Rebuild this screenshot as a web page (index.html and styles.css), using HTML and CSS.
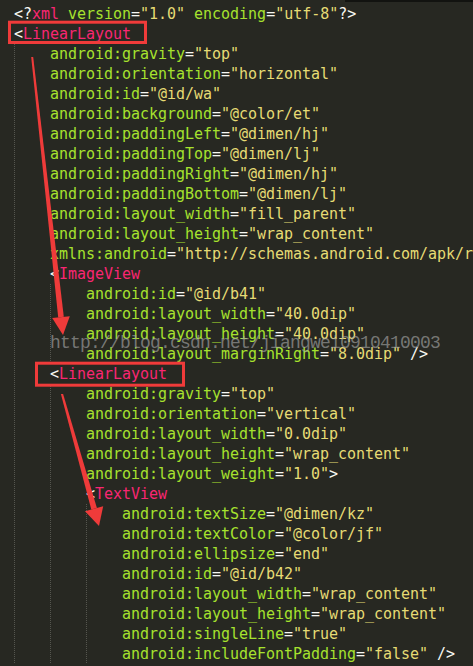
FILE: index.html
```html
<!DOCTYPE html>
<html lang="en">
  <head>
    <meta charset="UTF-8" />
    <title>layout.xml</title>
    <link rel="stylesheet" href="styles.css">
  </head>
  <body>
    <div class="editor">
      <div class="tab-edge"></div>
      <div class="code">
        <div class="ln"><span class="p">&lt;?</span><span class="t">xml</span> <span class="a">version</span><span class="p">=</span><span class="s">"1.0"</span> <span class="a">encoding</span><span class="p">=</span><span class="s">"utf-8"</span><span class="p">?&gt;</span></div>
        <div class="ln"><span class="p">&lt;</span><span class="t">LinearLayout</span></div>
        <div class="ln lvl1"><span class="a">android:gravity</span><span class="p">=</span><span class="s">"top"</span></div>
        <div class="ln lvl1"><span class="a">android:orientation</span><span class="p">=</span><span class="s">"horizontal"</span></div>
        <div class="ln lvl1"><span class="a">android:id</span><span class="p">=</span><span class="s">"@id/wa"</span></div>
        <div class="ln lvl1"><span class="a">android:background</span><span class="p">=</span><span class="s">"@color/et"</span></div>
        <div class="ln lvl1"><span class="a">android:paddingLeft</span><span class="p">=</span><span class="s">"@dimen/hj"</span></div>
        <div class="ln lvl1"><span class="a">android:paddingTop</span><span class="p">=</span><span class="s">"@dimen/lj"</span></div>
        <div class="ln lvl1"><span class="a">android:paddingRight</span><span class="p">=</span><span class="s">"@dimen/hj"</span></div>
        <div class="ln lvl1"><span class="a">android:paddingBottom</span><span class="p">=</span><span class="s">"@dimen/lj"</span></div>
        <div class="ln lvl1"><span class="a">android:layout_width</span><span class="p">=</span><span class="s">"fill_parent"</span></div>
        <div class="ln lvl1"><span class="a">android:layout_height</span><span class="p">=</span><span class="s">"wrap_content"</span></div>
        <div class="ln lvl1"><span class="a">xmlns:android</span><span class="p">=</span><span class="s">"http://schemas.android.com/apk/res/android"</span><span class="p">&gt;</span></div>
        <div class="ln lvl1"><span class="p">&lt;</span><span class="t">ImageView</span></div>
        <div class="ln lvl2"><span class="a">android:id</span><span class="p">=</span><span class="s">"@id/b41"</span></div>
        <div class="ln lvl2"><span class="a">android:layout_width</span><span class="p">=</span><span class="s">"40.0dip"</span></div>
        <div class="ln lvl2"><span class="a">android:layout_height</span><span class="p">=</span><span class="s">"40.0dip"</span></div>
        <div class="ln lvl2"><span class="a">android:layout_marginRight</span><span class="p">=</span><span class="s">"8.0dip"</span> <span class="p">/&gt;</span></div>
        <div class="ln lvl1"><span class="p">&lt;</span><span class="t">LinearLayout</span></div>
        <div class="ln lvl2"><span class="a">android:gravity</span><span class="p">=</span><span class="s">"top"</span></div>
        <div class="ln lvl2"><span class="a">android:orientation</span><span class="p">=</span><span class="s">"vertical"</span></div>
        <div class="ln lvl2"><span class="a">android:layout_width</span><span class="p">=</span><span class="s">"0.0dip"</span></div>
        <div class="ln lvl2"><span class="a">android:layout_height</span><span class="p">=</span><span class="s">"wrap_content"</span></div>
        <div class="ln lvl2"><span class="a">android:layout_weight</span><span class="p">=</span><span class="s">"1.0"</span><span class="p">&gt;</span></div>
        <div class="ln lvl2"><span class="p">&lt;</span><span class="t">TextView</span></div>
        <div class="ln lvl3"><span class="a">android:textSize</span><span class="p">=</span><span class="s">"@dimen/kz"</span></div>
        <div class="ln lvl3"><span class="a">android:textColor</span><span class="p">=</span><span class="s">"@color/jf"</span></div>
        <div class="ln lvl3"><span class="a">android:ellipsize</span><span class="p">=</span><span class="s">"end"</span></div>
        <div class="ln lvl3"><span class="a">android:id</span><span class="p">=</span><span class="s">"@id/b42"</span></div>
        <div class="ln lvl3"><span class="a">android:layout_width</span><span class="p">=</span><span class="s">"wrap_content"</span></div>
        <div class="ln lvl3"><span class="a">android:layout_height</span><span class="p">=</span><span class="s">"wrap_content"</span></div>
        <div class="ln lvl3"><span class="a">android:singleLine</span><span class="p">=</span><span class="s">"true"</span></div>
        <div class="ln lvl3"><span class="a">android:includeFontPadding</span><span class="p">=</span><span class="s">"false"</span> <span class="p">/&gt;</span></div>
      </div>

      <!-- watermark of the blog the screenshot came from -->
      <div class="watermark">http://blog.csdn.net/jiangwei0910410003</div>

      <!-- red annotations drawn over the code -->
      <svg class="marks" width="473" height="666" viewBox="0 0 473 666">
        <rect x="9.5" y="22.2" width="136" height="20.3" fill="none" stroke="#ef3b3a" stroke-width="3" />
        <rect x="36.5" y="363.2" width="147" height="22" fill="none" stroke="#ef3b3a" stroke-width="3" />
        <polygon points="31.2,57 33.2,57 63.8,316.8 58.2,317.4" fill="#ef3b3a" />
        <polygon points="52.2,318 69.8,316.2 63,335" fill="#ef3b3a" />
        <polygon points="60.9,394 63.1,394 96.9,508 91.3,509.5" fill="#ef3b3a" />
        <polygon points="85,511.2 103.2,506.2 99,526" fill="#ef3b3a" />
      </svg>
    </div>
  </body>
</html>
```

FILE: styles.css
```css
/* General Styles */
body {
  margin: 0;
  padding: 0;
  background-color: #272822;
  overflow: hidden;
}

.editor {
  position: relative;
  width: 473px;
  height: 666px;
  overflow: hidden;
  background-color: #272822;
}

.tab-edge {
  height: 2px;
  margin-left: 345px;
  background-color: #121310;
}

/* Code Styles */
.code {
  padding-top: 2px;
  font-family: "DejaVu Sans Mono", "Liberation Mono", monospace;
  font-size: 15px;
  line-height: 20px;
  letter-spacing: -0.03px;
  color: #f8f8f2;
}

.ln {
  height: 20px;
  padding-left: 14px;
  white-space: pre;
  background-size: 1px 2px;
  background-repeat: repeat-y;
}

.lvl1 {
  padding-left: 50px;
  background-image: linear-gradient(#55564f 50%, transparent 50%);
  background-position: 14px 0;
}

.lvl2 {
  padding-left: 86px;
  background-image:
    linear-gradient(#55564f 50%, transparent 50%),
    linear-gradient(#55564f 50%, transparent 50%);
  background-position: 14px 0, 50px 0;
}

.lvl3 {
  padding-left: 122px;
  background-image:
    linear-gradient(#55564f 50%, transparent 50%),
    linear-gradient(#55564f 50%, transparent 50%),
    linear-gradient(#55564f 50%, transparent 50%);
  background-position: 14px 0, 50px 0, 86px 0;
}

.p {
  color: #f8f8f2;
}

.t {
  color: #f92672;
}

.a {
  color: #a6e22e;
}

.s {
  color: #e6db74;
}

/* Overlay Styles */
.watermark {
  position: absolute;
  left: 50px;
  top: 333px;
  font-family: "Liberation Mono", monospace;
  font-size: 18px;
  letter-spacing: -0.8px;
  line-height: 20px;
  color: rgba(165, 165, 165, 0.65);
  white-space: pre;
}

.marks {
  position: absolute;
  left: 0;
  top: 0;
}
```
